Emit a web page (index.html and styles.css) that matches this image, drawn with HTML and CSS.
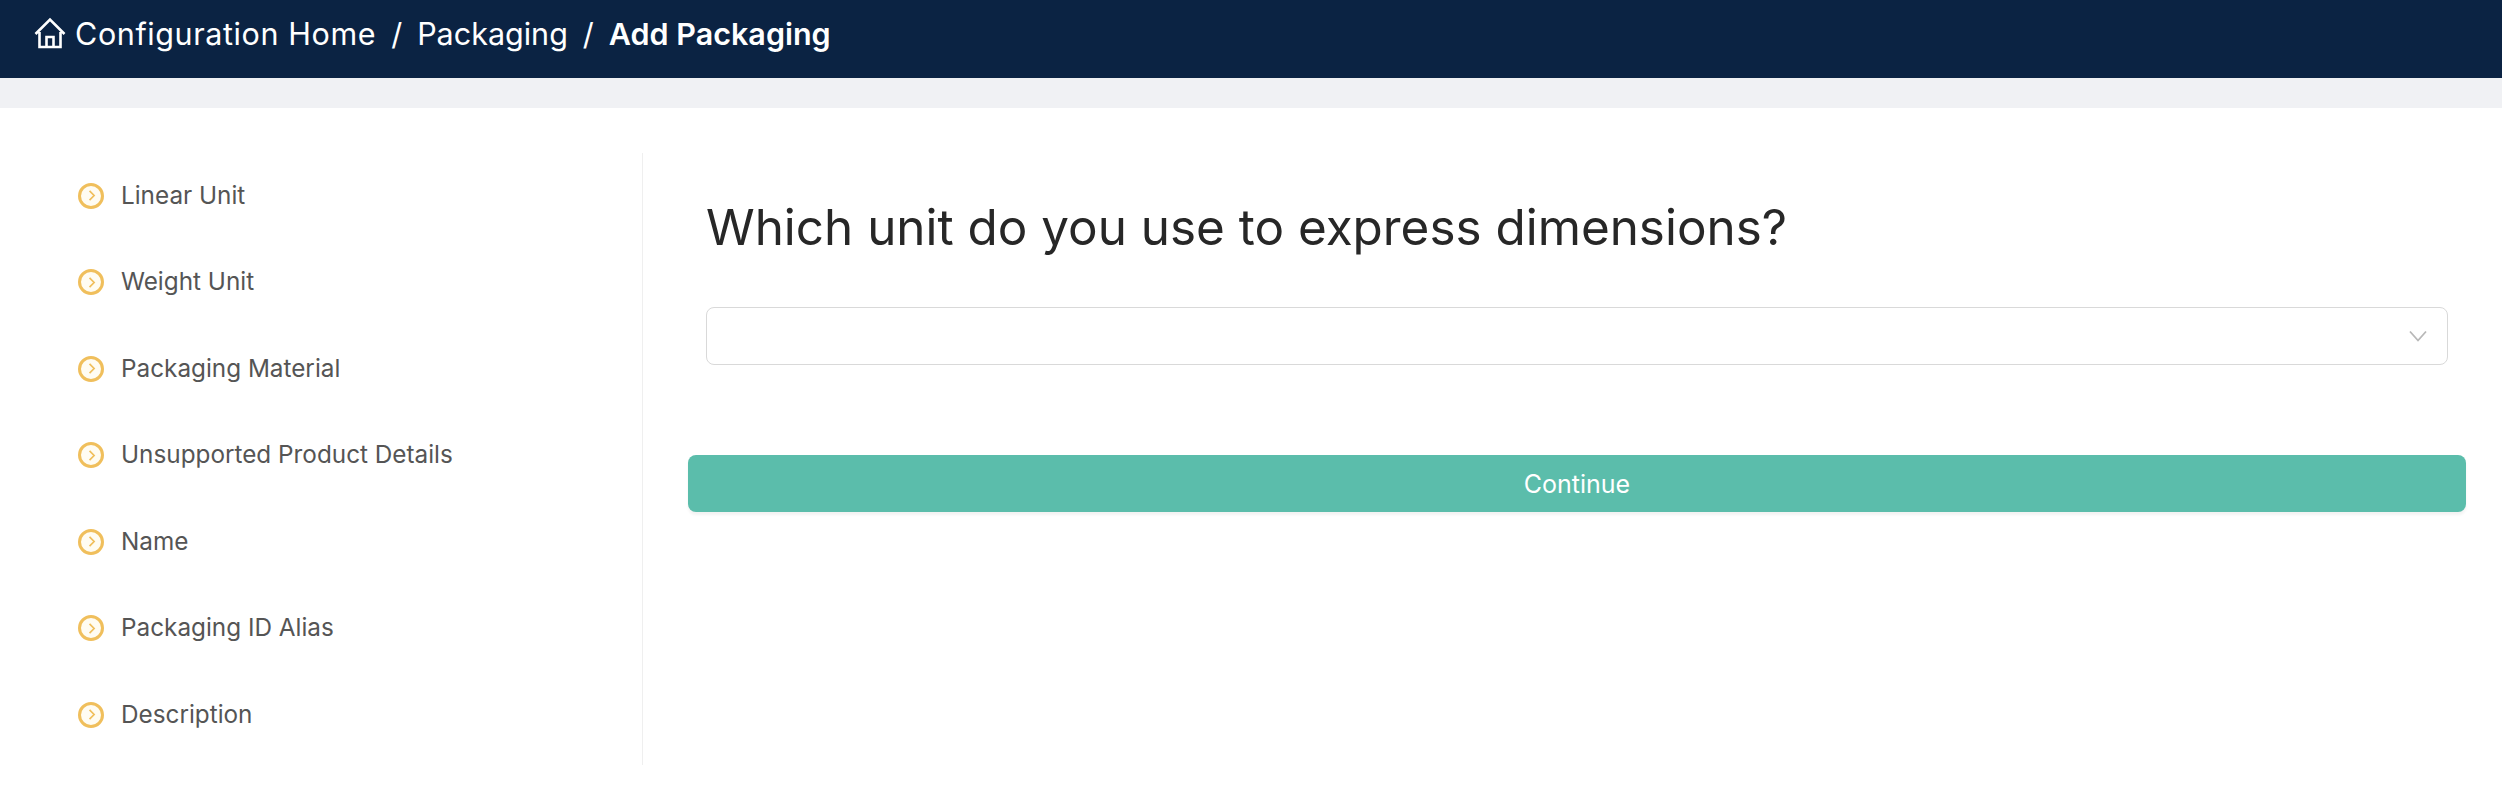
FILE: index.html
```html
<!DOCTYPE html>
<html lang="en">
<head>
<meta charset="utf-8">
<title>Add Packaging</title>
<link rel="stylesheet" href="styles.css">
</head>
<body>
<header class="topbar">
  <svg class="home" viewBox="0 0 32 32" width="32" height="32" fill="none" stroke="#fff" stroke-width="2.6" stroke-linejoin="miter"><path d="M1.500 17 16 2.500 30.500 17M5.500 15v15h21V15M12.500 30V20h7v10"/></svg>
  <span class="crumb home-link">Configuration Home</span><span class="sep">/</span>
  <span class="crumb">Packaging</span><span class="sep">/</span>
  <span class="crumb current">Add Packaging</span>
</header>
<div class="strip"></div>
<main class="layout">
  <nav class="steps">
    <div class="step"><span class="dot"><svg viewBox="0 0 10 10" width="13" height="13"><path d="M3.500 1.500 7 5 3.500 8.500"/></svg></span>Linear Unit</div>
    <div class="step"><span class="dot"><svg viewBox="0 0 10 10" width="13" height="13"><path d="M3.500 1.500 7 5 3.500 8.500"/></svg></span>Weight Unit</div>
    <div class="step"><span class="dot"><svg viewBox="0 0 10 10" width="13" height="13"><path d="M3.500 1.500 7 5 3.500 8.500"/></svg></span>Packaging Material</div>
    <div class="step"><span class="dot"><svg viewBox="0 0 10 10" width="13" height="13"><path d="M3.500 1.500 7 5 3.500 8.500"/></svg></span>Unsupported Product Details</div>
    <div class="step"><span class="dot"><svg viewBox="0 0 10 10" width="13" height="13"><path d="M3.500 1.500 7 5 3.500 8.500"/></svg></span>Name</div>
    <div class="step"><span class="dot"><svg viewBox="0 0 10 10" width="13" height="13"><path d="M3.500 1.500 7 5 3.500 8.500"/></svg></span>Packaging ID Alias</div>
    <div class="step"><span class="dot"><svg viewBox="0 0 10 10" width="13" height="13"><path d="M3.500 1.500 7 5 3.500 8.500"/></svg></span>Description</div>
  </nav>
  <section class="panel">
    <h1 class="question">Which unit do you use to express dimensions?</h1>
    <div class="select"><svg viewBox="0 0 18 12" width="18" height="12" fill="none" stroke="#b8b8b8" stroke-width="1.800"><path d="M1 1.500 9 10.500 17 1.500"/></svg></div>
    <button class="continue" type="button">Continue</button>
  </section>
</main>
</body>
</html>
```
FILE: styles.css
```css
* { box-sizing: border-box; }
html, body { margin: 0; height: 794px; overflow: hidden; background: #fff; }
body { font-family: "Inter", "Liberation Sans", sans-serif; }
.topbar { height: 78px; background: #0b2343; color: #fff; display: flex; align-items: center; padding: 0 0 12px 34px; font-size: 30.500px; }
.home { margin-right: 9px; flex: none; }
.home-link { letter-spacing: 0.600px; }
.sep { margin: 0 15px; }
.current { font-weight: 600; }
.strip { height: 30px; background: #f0f1f4; }
.layout { display: flex; padding-top: 45px; }
.steps { width: 643px; height: 612px; border-right: 1px solid #efefef; padding: 0 0 0 78px; display: flex; flex-direction: column; }
.step { height: 86.500px; display: flex; align-items: center; font-size: 24.300px; color: #555; flex: none; padding-bottom: 3px; }
.dot { width: 26px; height: 26px; border: 3px solid #f0bf5c; background: #fffcf2; border-radius: 50%; margin: 2px 17px 0 0; display: flex; align-items: center; justify-content: center; flex: none; }
.dot path { fill: none; stroke: #f0bf5c; stroke-width: 1.300; }
.panel { flex: 1; padding: 0 0 0 45px; display: flex; flex-direction: column; }
.question { margin: 44px 0 0 18px; font-size: 49.400px; font-weight: 400; color: #272727; line-height: 60px; white-space: nowrap; }
.select { margin: 50px 0 0 18px; height: 58px; border: 1px solid #d9d9d9; border-radius: 8px; display: flex; align-items: center; justify-content: flex-end; padding-right: 20px; width: 1742px; }
.continue { margin-top: 90px; height: 57px; width: 1778px; border: 0; border-radius: 8px; background: #5bbdab; color: #fff; font: 400 25px "Inter", "Liberation Sans", sans-serif; box-shadow: 0 3px 3px rgba(0,0,0,.05); }
```
